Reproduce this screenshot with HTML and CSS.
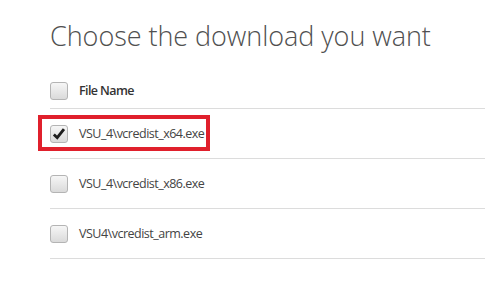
FILE: index.html
```html
<!DOCTYPE html>
<html>
<head>
<meta charset="utf-8">
<link rel="stylesheet" href="styles.css">
</head>
<body>
<div class="page">
  <h1 class="title">Choose the download you want</h1>
  <div class="list">
    <div class="row header">
      <span class="box"></span>
      <span class="label">File Name</span>
    </div>
    <div class="row item">
      <span class="box checked">
        <svg viewBox="0 0 18 18" width="18" height="18"><path d="M3.2 9.6 L7 13.2 L14.6 3.6" fill="none" stroke="#1e1e1e" stroke-width="3.2" stroke-linejoin="miter"/></svg>
      </span>
      <span class="label">VSU_4\vcredist_x64.exe</span>
      <span class="highlight"></span>
    </div>
    <div class="row item">
      <span class="box"></span>
      <span class="label">VSU_4\vcredist_x86.exe</span>
    </div>
    <div class="row item">
      <span class="box"></span>
      <span class="label">VSU4\vcredist_arm.exe</span>
    </div>
  </div>
</div>
</body>
</html>
```
FILE: styles.css
```css
html, body {
  margin: 0;
  padding: 0;
  background: #ffffff;
}
.page {
  padding-left: 50px;
  font-family: "Open Sans", "Liberation Sans", sans-serif;
}
.title {
  margin: 0;
  padding-top: 18px;
  font-weight: 300;
  font-size: 27px;
  line-height: 36px;
  color: #505050;
  letter-spacing: -0.05px;
}
.list {
  margin-top: 28px;
}
.row {
  position: relative;
  display: flex;
  align-items: center;
  border-bottom: 1px solid #dcdcdc;
}
.header {
  height: 26px;
  align-items: flex-start;
}
.item {
  height: 49px;
}
.box {
  box-sizing: border-box;
  width: 18px;
  height: 18px;
  border: 1px solid #b4b4b4;
  border-radius: 3px;
  background: linear-gradient(#f6f6f6, #dadada);
  display: flex;
  align-items: center;
  justify-content: center;
  flex: none;
}
.box svg {
  display: block;
}
.label {
  margin-left: 11px;
  font-size: 12.5px;
  color: #444444;
  letter-spacing: -0.5px;
}
.header .label {
  font-weight: 600;
  color: #333333;
  line-height: 18px;
  letter-spacing: -0.6px;
}
.highlight {
  position: absolute;
  left: -12px;
  top: 6px;
  width: 172px;
  height: 36px;
  box-sizing: border-box;
  border: 4px solid #e0202c;
}
```
